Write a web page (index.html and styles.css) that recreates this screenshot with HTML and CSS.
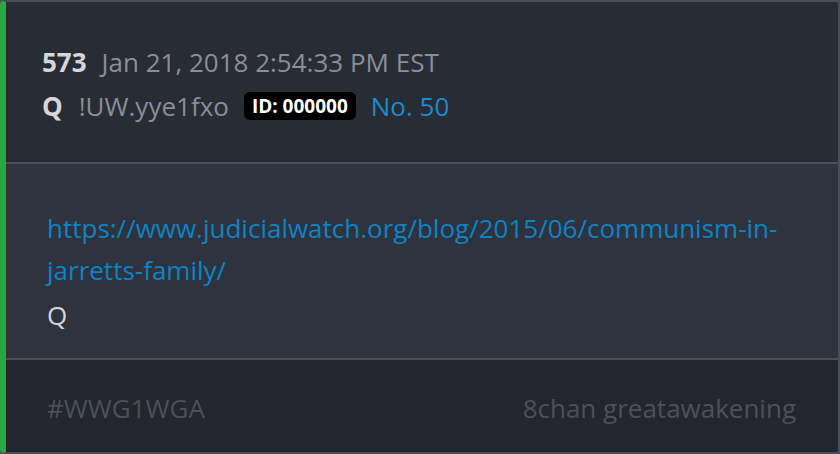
FILE: index.html
```html
<!DOCTYPE html>
<html>
<head>
<meta charset="utf-8">
<link rel="stylesheet" href="styles.css">
</head>
<body>
<div class="card">
  <div class="head">
    <div class="row"><span class="num">573</span><span class="date">Jan 21, 2018 2:54:33 PM EST</span></div>
    <div class="row"><span class="name">Q</span><span class="trip">!UW.yye1fxo</span><span class="id">ID: 000000</span><span class="no">No. 50</span></div>
  </div>
  <div class="body">
    <div class="links"><a class="link" href="#">https://www.judicialwatch.org/blog/2015/06/communism-in-jarretts-family/</a></div>
    <div class="text">Q</div>
  </div>
  <div class="foot">
    <span>#WWG1WGA</span>
    <span>8chan greatawakening</span>
  </div>
</div>
</body>
</html>
```

FILE: styles.css
```css
html, body { margin: 0; padding: 0; background: #4a4e58; }
body { width: 840px; height: 454px; font-family: "Open Sans", sans-serif; }
.card {
  box-sizing: border-box;
  width: 840px; height: 454px;
  border: 2px solid #4a4e58;
  border-left: 6px solid #28a745;
  border-radius: 5px;
  background: #282c34;
  display: flex; flex-direction: column;
  overflow: hidden;
}
.head {
  height: 162px;
  flex: none;
  box-sizing: border-box;
  padding: 38px 36px 0 36px;
  background: #282c34;
  border-bottom: 2px solid #4a4e58;
}
.row { display: flex; align-items: center; height: 44px; font-size: 26px; line-height: 44px; }
.num { font-weight: 700; color: #d5d6d8; margin-right: 15px; }
.date { color: #8a8e99; }
.name { font-weight: 700; color: #d5d6d8; margin-right: 16px; }
.trip { color: #8a8e99; margin-right: 15px; }
.id { background: #000; color: #fff; font-weight: 700; font-size: 19px; border-radius: 6px; padding: 0 8px; margin-right: 15px; line-height: 28px; height: 28px; }
.no { color: #1a8ad0; }
.body {
  height: 196px;
  flex: none;
  box-sizing: border-box;
  padding: 43px 42px 0 41px;
  background: #2e333d;
  border-bottom: 2px solid #4a4e58;
  font-size: 26px;
}
.links { line-height: 42px; }
.link { color: #0c83c6; text-decoration: none; }
.text { color: #d5d6d8; line-height: 48px; }
.foot {
  flex: 1;
  display: flex; justify-content: space-between; align-items: center;
  padding: 4px 42px 0 41px;
  background: #23262e;
  color: #4c505a;
  font-size: 26px;
}
```
